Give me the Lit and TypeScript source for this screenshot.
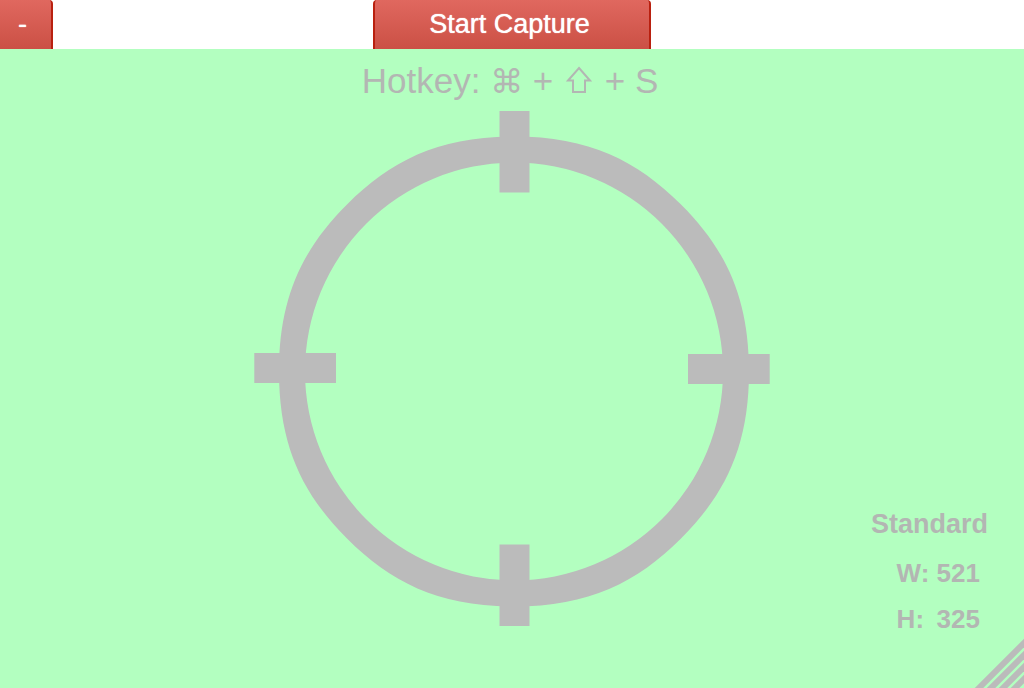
import { LitElement, html, css, svg } from "lit";
import { customElement, property } from "lit/decorators.js";

@customElement("cross-hair")
class CrossHair extends LitElement {
  static styles = css`
    :host {
      display: block;
      min-height: 0;
    }
    .sight {
      display: block;
      width: 100%;
      height: 100%;
      fill: #bbbbbb;
    }
  `;

  render() {
    return html`
      <svg class="sight" viewBox="254 111 516 515" aria-hidden="true">
        <path
          fill-rule="evenodd"
          d="M279 371.5
             C279 296.5 303 248.5 347 204.5 C391 160.5 439 136.5 514 136.5
             C589 136.5 637 160.5 681 204.5 C725 248.5 749 296.5 749 371.5
             C749 446.5 725 494.5 681 538.5 C637 582.5 589 606.5 514 606.5
             C439 606.5 391 582.5 347 538.5 C303 494.5 279 446.5 279 371.5 Z
             M305 371.5 A209 209 0 0 0 723 371.5 A209 209 0 0 0 305 371.5 Z"
        />
        <rect x="499.5" y="111" width="30" height="81.5" />
        <rect x="499.5" y="544.5" width="30" height="81.5" />
        <rect x="254.3" y="353" width="81.7" height="30" />
        <rect x="688" y="354" width="81.7" height="30" />
      </svg>
    `;
  }
}

@customElement("app-root")
class AppRoot extends LitElement {
  @property({ type: Number }) frameWidth = 521;
  @property({ type: Number }) frameHeight = 325;

  static styles = css`
    :host {
      display: flex;
      flex-direction: column;
      min-height: 100vh;
      background: #ffffff;
      font-family: "Liberation Sans", Arial, sans-serif;
    }
    .toolbar {
      display: grid;
      grid-template-columns: 1fr auto 1fr;
      height: 49px;
    }
    .button {
      box-sizing: border-box;
      margin: 0;
      padding: 0 59px 0 54px;
      border: 2px solid #b9200f;
      border-top-width: 0;
      border-bottom: 0;
      border-radius: 4px 4px 0 0;
      background: linear-gradient(#e0685f, #cb5045);
      color: #ffffff;
      font: 27px/49px "Liberation Sans", Arial, sans-serif;
      text-shadow: 0 0 1px #ffffff;
    }
    .minimize {
      justify-self: start;
      padding: 0 24px 0 18px;
      border-left: 0;
      border-radius: 0 4px 0 0;
    }
    .viewfinder {
      flex: 1;
      display: grid;
      grid-template-columns: 1fr minmax(0, 516px) 1fr;
      grid-template-rows: 62px minmax(0, 1fr) 62px;
      background: #b3ffc0;
      color: #b3b6b3;
    }
    .hotkey {
      grid-column: 1 / -1;
      margin: 0;
      padding-right: 4px;
      font-size: 35px;
      line-height: 64px;
      font-weight: 400;
      text-align: center;
      white-space: nowrap;
    }
    .key {
      font-family: "DejaVu Sans", sans-serif;
      font-size: 33px;
      line-height: 33px;
    }
    .shift {
      width: 26px;
      height: 27px;
      margin: 0 3px;
      fill: none;
      stroke: currentColor;
      stroke-width: 2;
    }
    .target {
      grid-column: 2;
      grid-row: 2;
    }
    .info {
      grid-column: 3;
      grid-row: 2 / -1;
      align-self: end;
      justify-self: end;
      padding: 0 36px 46px 0;
      font-size: 26px;
      line-height: 46px;
      font-weight: 700;
    }
    .preset {
      margin: 0;
      font-size: 27px;
      line-height: 52px;
    }
    .size {
      display: grid;
      grid-template-columns: 40px auto;
      justify-content: end;
      margin: 0;
      padding-right: 8px;
    }
    .size dt,
    .size dd {
      margin: 0;
    }
    .grip {
      grid-column: 3;
      grid-row: 3;
      place-self: end;
      display: block;
      width: 50px;
      height: 50px;
      stroke: #bbbbbb;
      stroke-width: 6;
    }
  `;

  render() {
    return html`
      <header class="toolbar">
        <button class="button minimize" type="button" aria-label="Minimize">-</button>
        <button class="button" type="button">Start Capture</button>
      </header>
      <main class="viewfinder">
        <p class="hotkey">
          Hotkey: <span class="key">⌘</span> +
          <svg class="shift" viewBox="0 0 26 27" role="img" aria-label="Shift">
            <path d="M13 2 L24 14.5 H19 V26 H7 V14.5 H2 Z" />
          </svg>
          + S
        </p>
        <cross-hair class="target"></cross-hair>
        <section class="info" aria-label="Capture size">
          <p class="preset">Standard</p>
          <dl class="size">
            <dt>W:</dt>
            <dd>${this.frameWidth}</dd>
            <dt>H:</dt>
            <dd>${this.frameHeight}</dd>
          </dl>
        </section>
        <svg class="grip" viewBox="0 0 50 50" aria-hidden="true">
          ${[55, 67, 79, 91].map(
            (sum) => svg`<line x1=${sum - 60} y1="60" x2="60" y2=${sum - 60} />`
          )}
        </svg>
      </main>
    `;
  }
}
